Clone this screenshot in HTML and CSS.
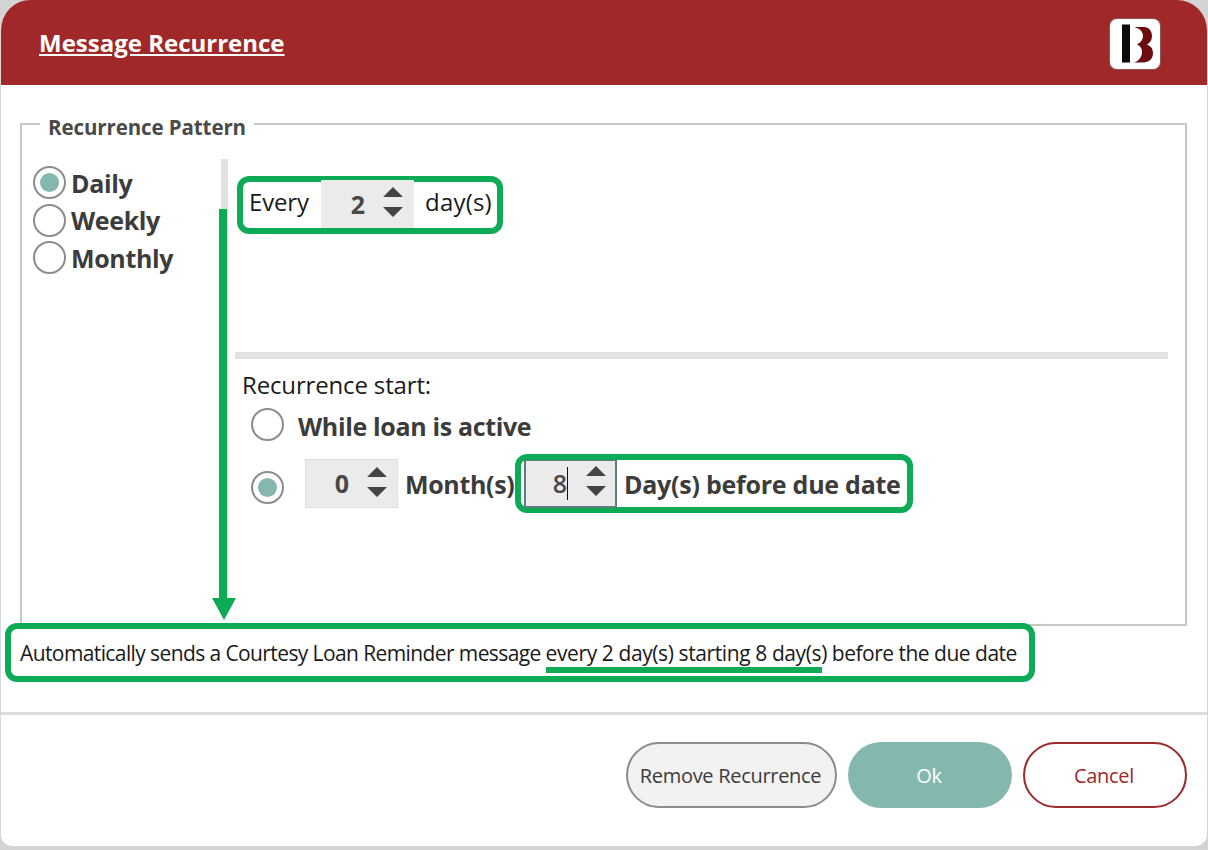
FILE: index.html
```html
<!DOCTYPE html>
<html lang="en">
<head>
<meta charset="utf-8">
<title>Message Recurrence</title>
<link rel="stylesheet" href="styles.css">
</head>
<body>
<div class="dialog">
  <header class="head">
    <h1 class="title">Message Recurrence</h1>
    <div class="logo">
      <svg width="50" height="50" viewBox="0 0 50 50">
        <rect x="12" y="5.5" width="8" height="38" fill="#0b0b0b"/>
        <path d="M24 8H34C39 8 42 12 42 17C42 21 40 24 37 25.500C41 27 43 30 43 34C43 40 39 43.500 33 43.500H24C29 42 32 38 32 33C32 29 30 27 27 25.500C30 24 33 21 33 17C33 12 29 9 24 8Z" fill="#6e0b10"/>
      </svg>
    </div>
  </header>
  <main class="body">
    <fieldset class="pattern">
      <legend class="legend">Recurrence Pattern</legend>
      <div class="columns">
        <div class="freq">
          <div class="freq-row"><span class="radio on"></span><span class="strong nudge">Daily</span></div>
          <div class="freq-row"><span class="radio"></span><span class="strong">Weekly</span></div>
          <div class="freq-row"><span class="radio"></span><span class="strong nudge">Monthly</span></div>
        </div>
        <div class="track"></div>
        <div class="detail">
          <div class="mark every">
            <span class="every-label plain">Every</span>
            <div class="spin"><span class="val">2</span>
              <svg class="arrows" width="20" height="30" viewBox="0 0 20 30"><path d="M10 0L20 10H0Z M0 20H20L10 30Z"/></svg>
            </div>
            <span class="days plain">day(s)</span>
          </div>
          <div class="rule"></div>
          <div class="start plain">Recurrence start:</div>
          <div class="opt-a"><span class="radio"></span><span class="strong opt-text">While loan is active</span></div>
          <div class="opt-b">
            <span class="radio on low"></span>
            <div class="spin boxed"><span class="val">0</span>
              <svg class="arrows" width="20" height="30" viewBox="0 0 20 30"><path d="M10 0L20 10H0Z M0 20H20L10 30Z"/></svg>
            </div>
            <span class="strong months">Month(s)</span>
            <div class="mark before">
              <div class="spin focus"><span class="val caret">8</span>
                <svg class="arrows" width="20" height="30" viewBox="0 0 20 30"><path d="M10 0L20 10H0Z M0 20H20L10 30Z"/></svg>
              </div>
              <span class="strong due">Day(s) before due date</span>
            </div>
          </div>
        </div>
      </div>
    </fieldset>
    <div class="mark summary">
      <p class="sentence">Automatically sends a Courtesy Loan Reminder message <span class="hl">every 2 day(s) starting 8 day(s)</span> <span class="tail">before the due date</span></p>
    </div>
  </main>
  <footer class="foot">
    <button class="btn remove">Remove Recurrence</button>
    <button class="btn ok">Ok</button>
    <button class="btn cancel">Cancel</button>
  </footer>
  <svg class="arrow" width="24" height="411" viewBox="0 0 24 411"><path d="M7 0H15V389H24L12 411L0 389H7Z" fill="#0dab56"/></svg>
</div>
</body>
</html>
```
FILE: styles.css
```css
* { box-sizing: border-box; }
html, body { margin: 0; height: 850px; overflow: hidden; }
body { background: #d4d4d4; font-family: "Open Sans", "Noto Sans", sans-serif; color: #3c3c3c; }
.dialog { position: relative; width: 1207px; height: 846px; background: #fff; border-radius: 30px 30px 12px 12px; border-left: 1px solid #d9d9d9; display: flex; flex-direction: column; overflow: hidden; }
.head { flex: none; height: 85px; margin-left: -1px; background: #a02829; display: flex; align-items: center; justify-content: space-between; padding: 0 47px 0 39px; }
.title { margin: 0; color: #fff; font-size: 24px; font-weight: 700; text-decoration: underline; }
.logo { width: 50px; height: 50px; margin-top: 3px; background: #fff; border-radius: 7px; box-shadow: 0 0 0 1px #8a5a5a; }
.logo svg { display: block; }
.body { flex: 1; padding-top: 22px; }
.pattern { margin: 0 0 0 19px; width: 1167px; height: 519px; padding: 0; border: 2px solid #c8c8c8; min-width: 0; }
.legend { margin-left: 18px; padding: 6px 8px 0; font-size: 20.500px; font-weight: 700; color: #4a4a4a; line-height: 28px; letter-spacing: -0.1px; }
.columns { display: flex; margin-top: 18px; }
.freq { width: 199px; padding: 7px 0 0 11px; display: flex; flex-direction: column; gap: 4.500px; }
.freq-row { display: flex; align-items: center; height: 33px; gap: 5px; }
.radio { flex: none; width: 33px; height: 33px; border: 2px solid #8c8c8c; border-radius: 50%; display: flex; align-items: center; justify-content: center; }
.radio.on::before { content: ""; width: 19px; height: 19px; border-radius: 50%; background: #84b8ae; }
.strong { font-size: 25px; font-weight: 700; color: #3c3c3c; line-height: 33px; letter-spacing: -0.35px; white-space: nowrap; }
.nudge { margin-top: 2px; }
.plain { font-size: 24px; color: #1a1a1a; letter-spacing: -0.15px; white-space: nowrap; }
.track { flex: none; width: 7px; height: 440px; background: #e1e1e1; }
.detail { flex: none; width: 933px; margin-left: 7px; }
.mark { border: 6px solid #0dab56; border-radius: 12px; background: #fff; }
.every { display: flex; align-items: center; width: 266px; height: 58px; margin: 17px 0 0 2px; padding: 0 0 2px 6px; }
.every-label { width: 72px; margin-bottom: 5px; }
.days { margin: 0 0 5px 11px; letter-spacing: 0.2px; }
.spin { flex: none; display: flex; align-items: center; width: 93px; height: 48px; background: #ebebeb; }
.spin.boxed { height: 49px; border: 1px solid #dedede; }
.spin.focus { border: 2px solid #5f7d7e; border-top-width: 1px; }
.val { width: 44px; text-align: right; font-size: 25px; font-weight: 700; color: #484848; line-height: 33px; }
.boxed .val { width: 43px; }
.focus .val { width: 42px; }
.caret { font-weight: 600; border-right: 1px solid #111; }
.arrows { margin: -4px 0 0 18px; fill: #444; }
.rule { height: 7px; margin-top: 118px; background: #e3e1e1; }
.start { margin: 12px 0 0 7px; line-height: 28px; }
.opt-a { display: flex; align-items: center; height: 33px; margin: 9px 0 0 16px; }
.opt-text { margin: 4px 0 0 14px; }
.opt-b { display: flex; align-items: center; height: 59px; margin: 13px 0 0 16px; }
.radio.low { margin-top: 7px; }
.boxed { margin-left: 21px; }
.months { margin: 2px 0 0 7px; width: 110px; }
.before { display: flex; align-items: center; width: 398px; height: 59px; padding-left: 3px; }
.due { margin: 2px 0 0 7px; letter-spacing: -0.25px; }
.summary { position: relative; width: 1030px; height: 59px; margin: -3px 0 0 4px; display: flex; align-items: center; padding-left: 9px; }
.sentence { margin: 0; font-size: 21px; color: #1a1a1a; letter-spacing: -0.6px; white-space: nowrap; }
.hl { position: relative; letter-spacing: -0.4px; }
.hl::after { content: ""; position: absolute; left: 0; right: 5px; bottom: -6px; height: 6px; background: #0dab56; }
.tail { letter-spacing: -0.5px; }
.foot { flex: none; height: 134px; margin-left: -1px; border-top: 3px solid #dcdcdc; padding: 27px 20px 0 0; display: flex; justify-content: flex-end; align-items: flex-start; gap: 11px; }
.btn { height: 66px; border-radius: 33px; font-family: inherit; font-size: 20px; letter-spacing: -0.3px; padding: 0 2px 0 0; }
.remove { width: 211px; background: #f2f2f2; border: 2px solid #8c8c8c; color: #3c3c3c; }
.ok { width: 164px; background: #84b8ae; border: 0; color: #fff; }
.cancel { width: 164px; background: #fff; border: 2px solid #9c2a2c; color: #9c2a2c; }
.arrow { position: absolute; left: 211px; top: 209px; }
```
